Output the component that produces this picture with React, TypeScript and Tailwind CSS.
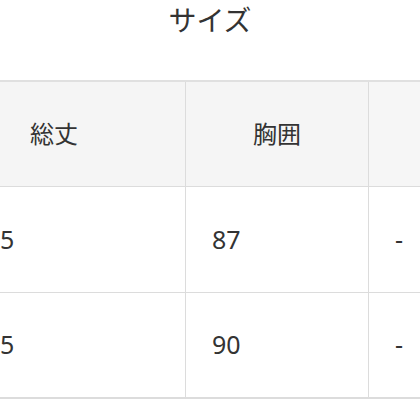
import React from "react";

const font = { fontFamily: '"Noto Sans", "Noto Sans CJK JP", sans-serif' };

export default function App() {
  return (
    <div className="w-[420px] h-[420px] bg-white overflow-hidden text-[#333]" style={font}>
      <div className="h-[40px] flex items-center justify-center text-[28px] leading-none">サイズ</div>
      <div className="mt-[40px] border-t-2 border-[#e0e0e0] grid grid-cols-[186px_183px_1fr]">
        <div className="h-[105px] bg-[#f5f5f5] border-r border-b border-[#dcdcdc] flex items-center pl-[30px] text-[24px]">総丈</div>
        <div className="h-[105px] bg-[#f5f5f5] border-r border-b border-[#dcdcdc] flex items-center justify-center text-[24px]">胸囲</div>
        <div className="h-[105px] bg-[#f6f6f6] border-b border-[#dcdcdc]"></div>

        <div className="h-[106px] border-r border-b border-[#dcdcdc] flex items-center text-[25px]"><span>5</span></div>
        <div className="h-[106px] border-r border-b border-[#dcdcdc] flex items-center pl-[26px] text-[25px]">87</div>
        <div className="h-[106px] border-b border-[#dcdcdc] flex items-center pl-[26px] text-[25px]">-</div>

        <div className="h-[106px] border-r border-b-2 border-[#dcdcdc] flex items-center text-[25px]"><span>5</span></div>
        <div className="h-[106px] border-r border-b-2 border-[#dcdcdc] flex items-center pl-[26px] text-[25px]">90</div>
        <div className="h-[106px] border-b-2 border-[#dcdcdc] flex items-center pl-[26px] text-[25px]">-</div>
      </div>
    </div>
  );
}
